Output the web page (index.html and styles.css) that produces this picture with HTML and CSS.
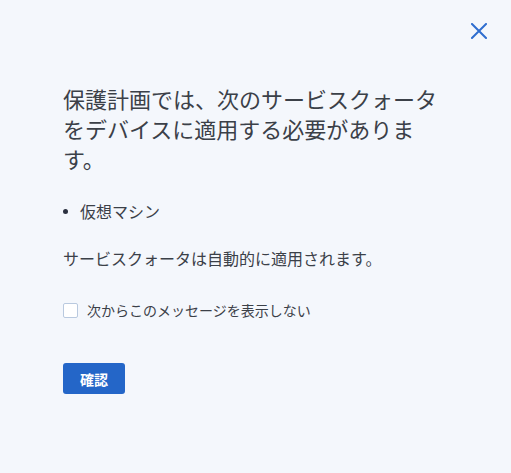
FILE: index.html
```html
<!DOCTYPE html>
<html lang="ja">
<head>
  <meta charset="UTF-8">
  <title>サービスクォータ</title>
  <meta name="viewport" content="width=device-width, initial-scale=1.0">
  <link rel="stylesheet" href="styles.css">
</head>
<body>
  <div class="dialog">
    <div class="dialog-top">
      <button class="close" aria-label="閉じる">
        <svg width="16" height="16" viewBox="0 0 16 16">
          <path d="M1 1 L15 15 M15 1 L1 15" stroke="#2f6ecf" stroke-width="2" stroke-linecap="square" fill="none"/>
        </svg>
      </button>
    </div>

    <h2 class="title">保護計画では、次のサービスクォータをデバイスに適用する必要があります。</h2>

    <ul class="quota-list">
      <li>仮想マシン</li>
    </ul>

    <p class="note">サービスクォータは自動的に適用されます。</p>

    <label class="dont-show">
      <input type="checkbox">
      <span class="box"></span>
      次からこのメッセージを表示しない
    </label>

    <button class="confirm">確認</button>
  </div>
</body>
</html>
```

FILE: styles.css
```css
body {
  margin: 0;
  background: #f4f7fc;
  font-family: "Noto Sans CJK JP", "Noto Sans", sans-serif;
  color: #3b4048;
}

.dialog {
  padding: 0 63px 40px;
}

.dialog-top {
  display: flex;
  justify-content: flex-end;
  padding-top: 23px;
  margin-right: -39px;
}

.close {
  background: none;
  border: none;
  padding: 0;
  width: 16px;
  height: 16px;
  cursor: pointer;
  display: block;
}

.close svg {
  display: block;
}

.title {
  margin: 44px 0 0;
  font-size: 22px;
  font-weight: normal;
  line-height: 30px;
  color: #3b4048;
}

.quota-list {
  list-style: none;
  margin: 26px 0 0;
  padding: 0;
}

.quota-list li {
  display: flex;
  align-items: center;
  font-size: 16px;
  line-height: 24px;
}

.quota-list li::before {
  content: "";
  width: 5px;
  height: 5px;
  border-radius: 50%;
  background: #2b3140;
  margin-right: 12px;
}

.note {
  margin: 23px 0 0;
  font-size: 16px;
  line-height: 24px;
}

.dont-show {
  display: flex;
  align-items: center;
  margin-top: 30px;
  font-size: 14px;
  line-height: 20px;
  cursor: pointer;
}

.dont-show input {
  display: none;
}

.dont-show .box {
  width: 13px;
  height: 13px;
  border: 1px solid #b9c9df;
  border-radius: 2px;
  background: #fff;
  margin-right: 9px;
}

.confirm {
  display: block;
  margin-top: 43px;
  width: 62px;
  height: 31px;
  padding: 0;
  background: #2466c8;
  color: #fff;
  border: none;
  border-radius: 3px;
  font-family: inherit;
  font-size: 14px;
  font-weight: bold;
  cursor: pointer;
}
```
